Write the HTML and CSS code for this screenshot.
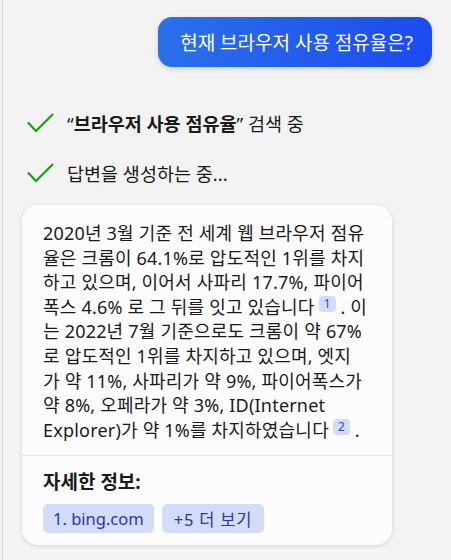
FILE: index.html
```html
<!DOCTYPE html>
<html lang="ko">
<head>
<meta charset="utf-8">
<link rel="stylesheet" href="styles.css">
</head>
<body>
<main class="chat">
  <div class="user-row">
    <div class="user-bubble">현재 브라우저 사용 점유율은?</div>
  </div>
  <div class="status">
    <div class="status-item">
      <svg class="check" width="28" height="20" viewBox="0 0 28 20"><path d="M1 9.5 L9 18 L26 1" fill="none" stroke="#16a116" stroke-width="2.2"/></svg>
      <span>“<b>브라우저 사용 점유율</b>” 검색 중</span>
    </div>
    <div class="status-item">
      <svg class="check" width="28" height="20" viewBox="0 0 28 20"><path d="M1 9.5 L9 18 L26 1" fill="none" stroke="#16a116" stroke-width="2.2"/></svg>
      <span>답변을 생성하는 중...</span>
    </div>
  </div>
  <section class="card">
    <p class="answer">2020년 3월 기준 전 세계 웹 브라우저 점유<br>율은 크롬이 64.1%로 압도적인 1위를 차지<br>하고 있으며, 이어서 사파리 17.7%, 파이어<br>폭스 4.6% 로 그 뒤를 잇고 있습니다<sup class="cite">1</sup> . 이<br>는 2022년 7월 기준으로도 크롬이 약 67%<br>로 압도적인 1위를 차지하고 있으며, 엣지<br>가 약 11%, 사파리가 약 9%, 파이어폭스가<br>약 8%, 오페라가 약 3%, ID(Internet<br>Explorer)가 약 1%를 차지하였습니다<sup class="cite">2</sup> .</p>
    <div class="more">
      <div class="more-title">자세한 정보:</div>
      <div class="chips">
        <span class="chip">1. bing.com</span>
        <span class="chip chip-more">+5 더 보기</span>
      </div>
    </div>
  </section>
</main>
</body>
</html>
```
FILE: styles.css
```css
html, body {
  margin: 0;
  padding: 0;
  background: #f3f3f3;
}
body {
  font-family: "Noto Sans", "Noto Sans CJK KR", sans-serif;
  color: #1a1a1a;
}
.chat {
  margin-left: 2px;
  border-left: 1px solid #d4d4d4;
  min-height: 560px;
  box-sizing: border-box;
  padding-top: 17px;
}
.user-row {
  display: flex;
  justify-content: flex-end;
  padding-right: 19px;
}
.user-bubble {
  height: 50px;
  display: flex;
  align-items: center;
  padding: 0 19px 0 22px;
  border-radius: 14px;
  background: linear-gradient(90deg, #2a71e9 0%, #1c4af0 100%);
  color: #fff;
  font-size: 19px;
  letter-spacing: 0;
  box-shadow: 0 2px 5px rgba(0,0,0,0.15);
}
.status {
  display: flex;
  flex-direction: column;
  gap: 26px;
  padding: 44px 0 0 24px;
}
.status-item {
  display: flex;
  align-items: center;
  gap: 12px;
  height: 24px;
  font-size: 18.5px;
}
.status-item b {
  font-weight: 700;
}
.check {
  display: block;
  flex: none;
}
.card {
  margin: 20px 0 0 19px;
  width: 370px;
  background: #fcfcfc;
  border-radius: 16px;
  box-shadow: 0 1px 4px rgba(0,0,0,0.14);
  overflow: hidden;
}
.answer {
  margin: 0;
  padding: 16px 21px 13px 21px;
  font-size: 18px;
  line-height: 24.6px;
  letter-spacing: 0.2px;
  white-space: nowrap;
}
.cite {
  display: inline-block;
  vertical-align: 6px;
  min-width: 17px;
  height: 16px;
  line-height: 16px;
  margin-left: 4px;
  border-radius: 4px;
  background: #d3dcf9;
  color: #3346b0;
  font-size: 12px;
  text-align: center;
  letter-spacing: 0;
}
.more {
  border-top: 1px solid #e2e2e2;
  padding: 15px 21px 12px 21px;
}
.more-title {
  font-size: 19px;
  font-weight: 700;
  line-height: 22px;
}
.chips {
  display: flex;
  gap: 8px;
  margin-top: 11px;
}
.chip {
  display: inline-flex;
  align-items: center;
  height: 29px;
  padding: 0 10px;
  border-radius: 5px;
  background: #d3dcf9;
  color: #263a9e;
  font-size: 16.5px;
}
.chip-more {
  padding: 0 12px;
  letter-spacing: 0.8px;
}
```
